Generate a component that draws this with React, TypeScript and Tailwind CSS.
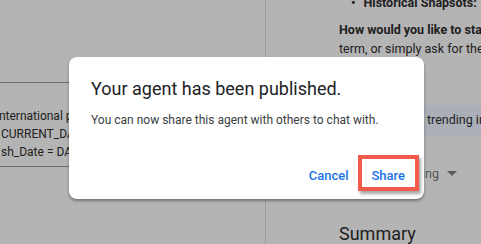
import React from "react";

export default function App() {
  return (
    <div
      className="relative w-[481px] h-[244px] overflow-hidden bg-[#b4b4b4] text-[#202020]"
      style={{ fontFamily: "Roboto, 'Liberation Sans', sans-serif" }}
    >
      <div className="flex h-full">
        {/* Left panel */}
        <div className="w-[266px] shrink-0 overflow-hidden pt-[82px] border-r border-[#9c9c9c]">
          <div className="border-t border-[#6e6e6e]" />
          <div className="pt-[24px] pb-[5px] text-[12px] leading-[18px] whitespace-nowrap">
            <div className="ml-[-4px]">international publications and reports</div>
            <div className="ml-[1px]">CURRENT_DATE() AND</div>
            <div className="ml-[1px]">sh_Date = DATE_SUB(CURRENT_DATE(), INTERVAL 1 DAY)</div>
          </div>
          <div className="border-t border-[#6e6e6e]" />
        </div>

        {/* Right panel */}
        <div className="flex-1 overflow-hidden pl-[73px] whitespace-nowrap">
          <div className="mt-[-6px] flex items-center text-[12.5px] font-bold leading-[18px]">
            <span className="ml-[12px] mr-[8px]">•</span>
            <span>Historical Snapsots:</span>
          </div>
          <div className="mt-[8px] text-[12.5px] font-bold leading-[19px]">
            How would you like to start? Enter a
          </div>
          <div className="text-[12.5px] leading-[19px]">
            term, or simply ask for the latest trends.
          </div>
          <div className="mt-[47px] ml-[-10px] h-[31px] bg-[#abb0b8] flex items-center">
            <span className="ml-[98px] text-[12.5px]">trending in</span>
          </div>
          <div className="mt-[30px] flex items-center h-[16px]">
            <div className="w-[100px] text-right text-[12.5px] text-[#555]">Trending</div>
            <svg width="10" height="6" viewBox="0 0 10 6" className="ml-[8px]">
              <path d="M0 0 L10 0 L5 5 Z" fill="#5a5a5a" />
            </svg>
          </div>
          <div className="mt-[41px] text-[18px] leading-[22px] text-[#202020]">Summary</div>
        </div>
      </div>

      {/* Dialog */}
      <div className="absolute left-[69px] top-[57px] w-[355px] h-[142px] bg-white rounded-[8px] shadow-[0_2px_3px_rgba(0,0,0,0.35)]">
        <div className="pl-[22px] pt-[21px] text-[18px] leading-[22px] text-[#202124]">
          Your agent has been published.
        </div>
        <div className="pl-[22px] pt-[11px] text-[12px] leading-[18px] text-[#3c4043]">
          You can now share this agent with others to chat with.
        </div>
        <div className="flex justify-end gap-[7px] pr-[11px] pt-[34px]">
          <button className="px-[8px] h-[26px] text-[13px] font-medium text-[#1a73e8]">Cancel</button>
          <button className="px-[8px] h-[26px] text-[13px] font-medium text-[#1a73e8]">Share</button>
        </div>
      </div>

      {/* Annotation box */}
      <div className="absolute left-[358px] top-[155px] w-[61px] h-[36px] border-[4px] border-[#f25a4b] shadow-[2px_3px_3px_rgba(0,0,0,0.35)]" />
    </div>
  );
}
